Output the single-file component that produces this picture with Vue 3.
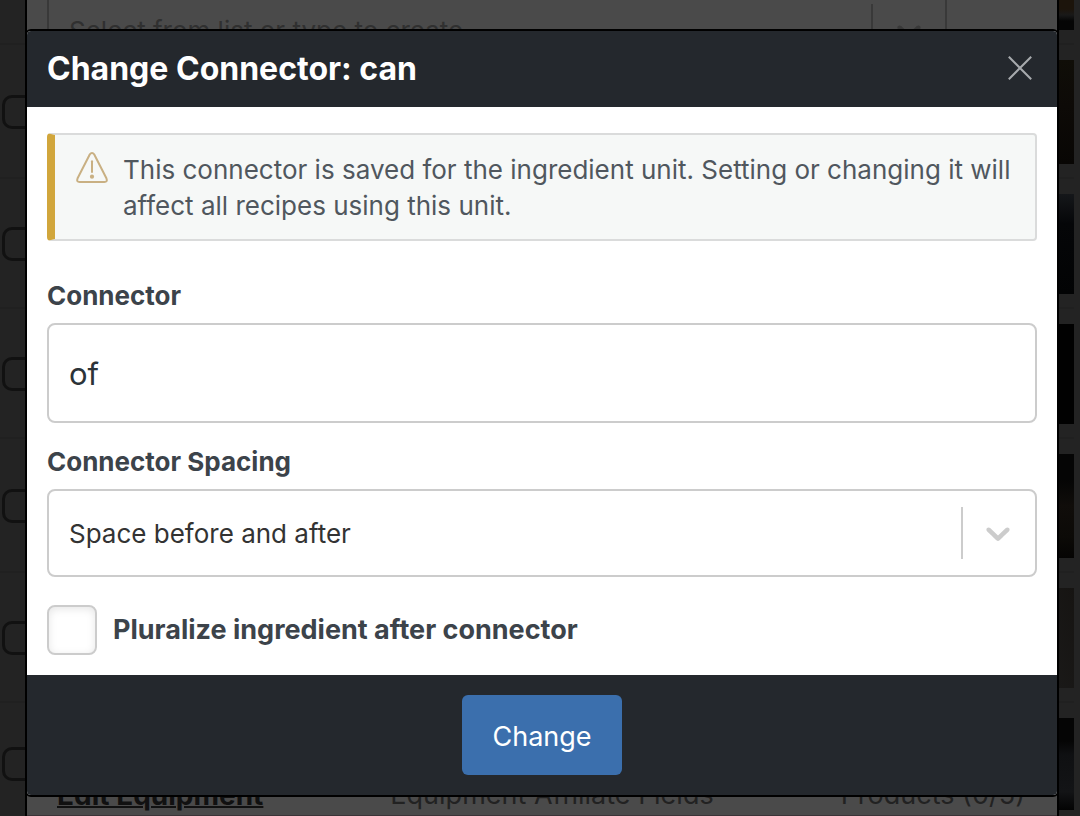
<script setup>
import { ref } from 'vue'

const connector = ref('of')
const spacing = ref('both')
const pluralize = ref(false)

const rows = ['first', 'tall', 'normal', 'normal', 'tall', 'normal', 'last']
const tones = ['plate', 'herb', 'glass', 'night', 'bread', 'wood', 'pan']
</script>

<template>
  <div class="screen">
    <div class="recipes" aria-hidden="true">
      <div v-for="(size, i) in rows" :key="i" class="recipe" :class="size">
        <span class="tick"></span>
        <span class="thumb" :class="tones[i]"></span>
      </div>
    </div>

    <div class="sheet" aria-hidden="true">
      <div class="sheet-select">
        <span class="sheet-placeholder">Select from list or type to create</span>
        <span class="sheet-arrow">
          <svg width="40" height="40" viewBox="0 0 20 20"><path fill="currentColor" d="M4.516 7.548c0.436-0.446 1.043-0.481 1.576 0l3.908 3.747 3.908-3.747c0.533-0.481 1.141-0.446 1.574 0 0.436 0.445 0.408 1.197 0 1.615-0.406 0.418-4.695 4.502-4.695 4.502-0.217 0.223-0.502 0.335-0.787 0.335s-0.57-0.112-0.789-0.335c0 0-4.287-4.084-4.695-4.502s-0.436-1.17 0-1.615z" /></svg>
        </span>
      </div>
      <div class="sheet-foot">
        <b>Edit Equipment</b>
        <span>Equipment Affiliate Fields</span>
        <span>Products (0/5)</span>
      </div>
    </div>

    <form class="modal" role="dialog" aria-labelledby="modal-title" @submit.prevent>
      <header class="head">
        <h1 id="modal-title">Change Connector: can</h1>
        <button type="button" class="close" aria-label="Close">
          <svg width="24" height="24" viewBox="0 0 24 24"><path d="M.8 .8 L23.2 23.2 M23.2 .8 L.8 23.2" fill="none" stroke="currentColor" stroke-width="2" /></svg>
        </button>
      </header>

      <div class="body">
        <div class="notice">
          <svg class="warn" width="32" height="32" viewBox="0 0 32 32">
            <path d="M13.6 2.7 Q16 -.5 18.4 2.7 L30.4 26.3 Q31.8 30 28.4 30.1 H3.6 Q.2 30 1.6 26.3 Z" fill="none" stroke="currentColor" stroke-width="2" stroke-linejoin="round" />
            <path d="M16 9.2 V20" stroke="currentColor" stroke-width="2" stroke-linecap="round" />
            <circle cx="16" cy="24.7" r="2.1" fill="currentColor" />
          </svg>
          <p>This connector is saved for the ingredient unit. Setting or changing it will affect all recipes using this unit.</p>
        </div>

        <label class="label" for="connector">Connector</label>
        <input id="connector" v-model="connector" class="text" type="text" />

        <label class="label" for="spacing">Connector Spacing</label>
        <div class="picker">
          <select id="spacing" v-model="spacing">
            <option value="both">Space before and after</option>
          </select>
          <span class="arrow">
            <svg width="40" height="40" viewBox="0 0 20 20"><path fill="currentColor" d="M4.516 7.548c0.436-0.446 1.043-0.481 1.576 0l3.908 3.747 3.908-3.747c0.533-0.481 1.141-0.446 1.574 0 0.436 0.445 0.408 1.197 0 1.615-0.406 0.418-4.695 4.502-4.695 4.502-0.217 0.223-0.502 0.335-0.787 0.335s-0.57-0.112-0.789-0.335c0 0-4.287-4.084-4.695-4.502s-0.436-1.17 0-1.615z" /></svg>
          </span>
        </div>

        <div class="check">
          <input id="pluralize" v-model="pluralize" type="checkbox" />
          <label for="pluralize">Pluralize ingredient after connector</label>
        </div>
      </div>

      <footer class="foot">
        <button type="submit" class="submit">Change</button>
      </footer>
    </form>
  </div>
</template>

<style>
body {
  background: #232323;
}
</style>

<style scoped>
.screen {
  display: grid;
  grid-template: minmax(100vh, auto) / minmax(0, 1fr);
  height: 100vh;
  overflow: hidden;
  background: #232323;
  font-family: Inter, "Liberation Sans", sans-serif;
  font-size: 26px;
}
.screen * {
  box-sizing: border-box;
}
.recipes,
.sheet,
.modal {
  grid-area: 1 / 1;
}

.recipes {
  height: 100vh;
  overflow: hidden;
  padding-right: 6px;
}
.recipe {
  display: flex;
  justify-content: space-between;
  align-items: center;
  height: 130px;
  padding: 15px 0 13px 2px;
  border-bottom: 2px solid #202020;
}
.recipe.first { height: 45px; padding-top: 0; }
.recipe.first .tick { visibility: hidden; }
.recipe.tall { height: 134px; }
.recipe.last { height: 122px; }
.tick {
  width: 34px;
  height: 34px;
  border: 3px solid #111;
  border-radius: 10px;
}
.thumb {
  align-self: stretch;
  width: 100px;
}
.plate { background: linear-gradient(#1c140b 0 30%, #191919 50%, #050505 70%); }
.herb { background: linear-gradient(#100e08, #0d0a07 45%, #080604); }
.glass { background: linear-gradient(#15171a, #050608 30%, #020304); }
.night { background: #010101; }
.bread { background: linear-gradient(#050505 25%, #100d0a 50%, #0c0a07 80%, #050403); }
.wood { background: linear-gradient(70deg, #15120f, #1a1918 60%, #161412); }
.pan { background: linear-gradient(#050505 25%, #0f1012 40%, #131416 80%, #030303); }

.sheet {
  display: flex;
  flex-direction: column;
  justify-content: space-between;
  height: 100vh;
  margin: 0 21px 0 25px;
  border: 2px solid #000;
  border-width: 0 2px;
  background: #4a4a4a;
  overflow: hidden;
}
.sheet-select {
  display: flex;
  justify-content: space-between;
  align-items: flex-start;
  height: 60px;
  margin: 0 110px 0 20px;
  padding: 4px 0 0 20px;
  border: 2px solid #393939;
  border-width: 0 2px;
  color: #303030;
}
.sheet-placeholder {
  padding-top: 11px;
  line-height: 32px;
}
.sheet-arrow {
  padding: 7px 16px;
  border-left: 2px solid #393939;
  color: #393939;
}
.sheet-foot {
  display: flex;
  justify-content: space-between;
  padding: 0 32px 2px 30px;
  border-bottom: 1px solid #3b3438;
  color: #222;
  font-size: 27px;
  line-height: 36px;
  white-space: nowrap;
}
.sheet-foot b {
  color: #111;
  font-size: 28px;
  text-decoration: underline;
  text-decoration-thickness: 2px;
}

.modal {
  align-self: start;
  display: flex;
  flex-direction: column;
  margin: 29px 21px 19px 25px;
  border: 2px solid #000;
  border-radius: 6px;
  background: #fff;
  overflow: hidden;
}
.head {
  display: flex;
  justify-content: space-between;
  align-items: center;
  padding: 17px 25px 17px 20px;
  background: #24282d;
  color: #fff;
}
.head h1 {
  margin: 0;
  font-size: 32px;
  font-weight: 700;
  line-height: 42px;
}
.close {
  display: flex;
  padding: 0 0 2px;
  border: 0;
  background: none;
  color: #a7aaad;
}

.body {
  display: flex;
  flex-direction: column;
  padding: 26px 20px 20px;
}
.notice {
  display: flex;
  gap: 15px;
  margin-bottom: 37px;
  padding: 17px 20px 15px 21px;
  border: 2px solid #dadbdb;
  border-left: 8px solid #d1a63c;
  border-radius: 4px;
  background: #f6f8f7;
  color: #50575e;
}
.warn {
  flex: none;
  color: #c9b083;
}
.notice p {
  margin: 0;
  line-height: 36px;
}
.label,
.check label {
  color: #3c434a;
  font-weight: 700;
  line-height: 36px;
}
.label {
  margin-bottom: 9px;
}
.text {
  width: 100%;
  height: 100px;
  margin-bottom: 21px;
  padding: 0 20px;
  border: 2px solid #ccc;
  border-radius: 8px;
  background: #fff;
  color: #2c3338;
  font: 31px Inter, "Liberation Sans", sans-serif;
}
.picker {
  display: grid;
  grid-template-columns: minmax(0, 1fr) 74px;
  align-items: center;
  height: 88px;
  margin-bottom: 28px;
  border: 2px solid #ccc;
  border-radius: 8px;
}
.picker select {
  grid-area: 1 / 1 / 2 / 3;
  width: 100%;
  height: 84px;
  padding: 0 90px 0 20px;
  border: 0;
  background: none;
  color: #333;
  font: inherit;
  appearance: none;
}
.arrow {
  grid-area: 1 / 2;
  display: flex;
  align-items: center;
  justify-content: center;
  height: 52px;
  padding-right: 2px;
  border-left: 2px solid #ccc;
  color: #ccc;
  pointer-events: none;
}
.check {
  display: flex;
  align-items: center;
  gap: 16px;
}
.check label {
  font-size: 27px;
}
.check input {
  width: 50px;
  height: 50px;
  margin: 0;
  border: 2px solid #ccc;
  border-radius: 8px;
  background: #fff;
  box-shadow: inset 0 2px 8px rgba(0, 0, 0, 0.1);
  appearance: none;
}
.check input:checked {
  background: #3b6fad;
}

.foot {
  display: flex;
  justify-content: center;
  padding: 20px;
  background: #24282d;
}
.submit {
  min-width: 160px;
  height: 80px;
  padding: 2px 30px 0;
  border: 0;
  border-radius: 6px;
  background: #3b6fad;
  color: #fff;
  font: 27px Inter, "Liberation Sans", sans-serif;
}
</style>
